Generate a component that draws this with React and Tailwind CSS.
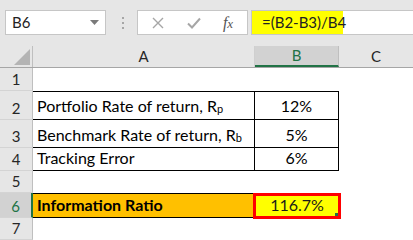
import React from "react";

const font = { fontFamily: "Lato, 'Liberation Sans', sans-serif" };

function RowHead({ n, active }) {
  return (
    <div
      className={`w-[33px] shrink-0 flex items-end justify-center pb-[3px] text-[15px] leading-none border-b border-[#d4d4d4] ${
        active
          ? "bg-[#d2d2d2] text-[#217346] border-r-2 border-r-[#217346]"
          : "bg-[#e6e6e6] text-[#262626] border-r border-r-[#bfbfbf]"
      }`}
    >
      {n}
    </div>
  );
}

export default function App() {
  return (
    <div className="w-[413px] h-[240px] overflow-hidden bg-white text-black" style={font}>
      {/* toolbar */}
      <div className="h-[46px] bg-[#e6e6e6] flex items-start pt-[10px]">
        <div className="ml-[5px] w-[101px] h-[25px] bg-white border border-[#c6c6c6] flex items-center pl-[6px] pr-[6px] text-[15px] text-[#222]">
          <span className="flex-1">B6</span>
          <svg width="9" height="5" viewBox="0 0 9 5">
            <path d="M0 0 L9 0 L4.5 5 Z" fill="#7a7a7a" />
          </svg>
        </div>
        <div className="ml-[15px] w-[3px] h-[25px] flex flex-col items-center justify-center gap-[3px]">
          <div className="w-[2px] h-[2px] bg-[#a6a6a6]" />
          <div className="w-[2px] h-[2px] bg-[#a6a6a6]" />
          <div className="w-[2px] h-[2px] bg-[#a6a6a6]" />
        </div>
        <div className="ml-[13px] w-[111px] h-[25px] bg-white border border-[#c6c6c6] flex items-center">
          <div className="w-[40px] flex justify-center">
            <svg width="12" height="12" viewBox="0 0 12 12">
              <path d="M1 1 L11 11 M11 1 L1 11" stroke="#a6a6a6" strokeWidth="1.4" />
            </svg>
          </div>
          <div className="w-[32px] flex justify-center">
            <svg width="14" height="12" viewBox="0 0 14 12">
              <path d="M1 6.5 L5 10.5 L13 1.5" stroke="#a6a6a6" strokeWidth="2" fill="none" />
            </svg>
          </div>
          <div
            className="w-[36px] flex items-baseline justify-center italic text-[#555] leading-none"
            style={{ fontFamily: "'Liberation Serif', serif" }}
          >
            <span className="text-[16px]">f</span>
            <span className="text-[13px]">x</span>
          </div>
        </div>
        <div className="ml-[3px] flex-1 h-[25px] bg-white border border-[#c6c6c6] border-r-0 flex">
          <div className="w-[91px] h-full bg-[#ffff00] flex items-center pl-[10px] text-[15px] text-[#222] whitespace-nowrap">
            =(B2-B3)/B4
          </div>
        </div>
      </div>

      {/* column headers */}
      <div className="h-[22px] flex bg-[#e6e6e6] border-b border-[#a6a6a6] text-[15px] text-[#262626]">
        <div className="w-[33px] shrink-0 border-r border-[#bfbfbf] relative">
          <svg className="absolute right-[2px] bottom-[2px]" width="16" height="16" viewBox="0 0 16 16">
            <path d="M16 0 L16 16 L0 16 Z" fill="#b4b4b4" />
          </svg>
        </div>
        <div className="w-[222px] shrink-0 flex items-center justify-center border-r border-[#cfcfcf]">A</div>
        <div className="w-[84px] shrink-0 flex items-center justify-center bg-[#d2d2d2] text-[#217346] border-b-2 border-[#217346] border-r border-r-[#bfbfbf]">B</div>
        <div className="flex-1 flex items-center justify-center">C</div>
      </div>

      {/* row 1 */}
      <div className="flex h-[23px]">
        <RowHead n="1" />
        <div className="flex-1" />
      </div>

      {/* row 2 */}
      <div className="flex h-[29px] text-[16px] leading-none">
        <RowHead n="2" />
        <div className="w-[222px] shrink-0 border-t border-b border-r border-black flex items-end pl-[4px] pb-[5px] whitespace-nowrap">
          <span>
            Portfolio Rate of return, R<sub className="text-[11px] relative top-[1px]">p</sub>
          </span>
        </div>
        <div className="w-[84px] shrink-0 border-t border-b border-r border-black flex items-end justify-center pb-[5px]">
          12%
        </div>
        <div className="flex-1" />
      </div>

      {/* row 3 */}
      <div className="flex h-[28px] text-[16px] leading-none">
        <RowHead n="3" />
        <div className="w-[222px] shrink-0 border-b border-r border-black flex items-end pl-[4px] pb-[4px] whitespace-nowrap">
          <span>
            Benchmark Rate of return, R<sub className="text-[11px] relative top-[1px]">b</sub>
          </span>
        </div>
        <div className="w-[84px] shrink-0 border-b border-r border-black flex items-end justify-center pb-[4px]">
          5%
        </div>
        <div className="flex-1" />
      </div>

      {/* row 4 */}
      <div className="flex h-[23px] text-[16px] leading-none">
        <RowHead n="4" />
        <div className="w-[222px] shrink-0 border-b border-r border-black flex items-end pl-[4px] pb-[4px]">
          Tracking Error
        </div>
        <div className="w-[84px] shrink-0 border-b border-r border-black flex items-end justify-center pb-[4px]">
          6%
        </div>
        <div className="flex-1" />
      </div>

      {/* row 5 */}
      <div className="flex h-[22px]">
        <RowHead n="5" />
        <div className="flex-1" />
      </div>

      {/* row 6 */}
      <div className="flex h-[25px] text-[16px] leading-none">
        <RowHead n="6" active />
        <div className="w-[222px] shrink-0 border-t border-b border-black bg-[#ffc000] flex items-end pl-[4px] pb-[4px] font-bold">
          Information Ratio
        </div>
        <div className="w-[84px] shrink-0 bg-[#ffff00] relative flex items-end justify-center pb-[5px] text-[#1a1a1a]">
          116.7%
          <div className="absolute left-[-2px] right-[-2px] top-0 bottom-[-1px] border-[3px] border-[#ff0000]" />
          <div className="absolute right-[1px] bottom-[2px] w-[3px] h-[3px] bg-[#217346]" />
        </div>
        <div className="flex-1" />
      </div>

      {/* row 7 */}
      <div className="flex h-[22px]">
        <RowHead n="7" />
        <div className="flex-1" />
      </div>
    </div>
  );
}
